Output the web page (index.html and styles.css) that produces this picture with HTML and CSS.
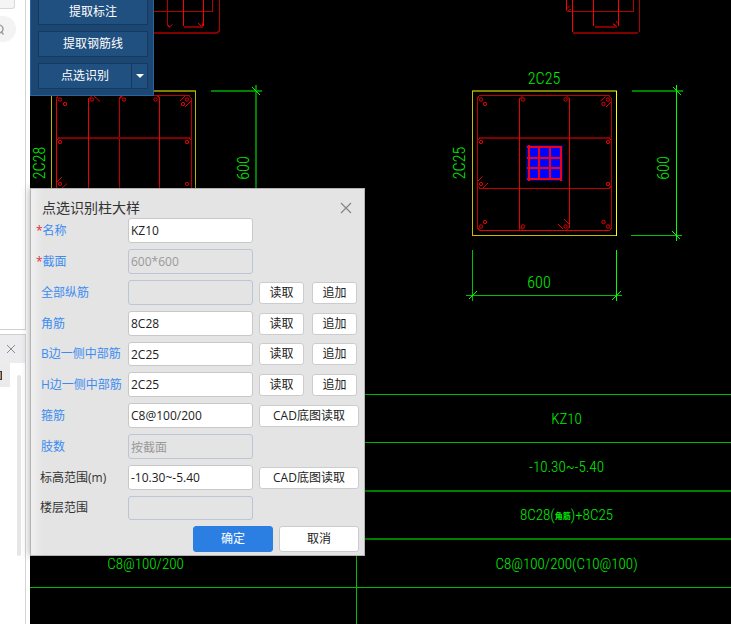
FILE: index.html
```html
<!DOCTYPE html>
<html lang="zh-CN">
<head>
<meta charset="utf-8">
<title>点选识别柱大样</title>
<link rel="stylesheet" href="styles.css">
</head>
<body>
<div class="app">
  <aside class="sidebar">
    <section class="pane pane-top">
      <div class="tab-stub"></div>
      <button class="search" aria-label="搜索"><svg width="16" height="26" viewBox="0 0 16 26"><circle cx="-1" cy="13" r="4" fill="none" stroke="#9a9a9a" stroke-width="1.4"/><path d="M1 15.500l2.500 3" stroke="#9a9a9a" stroke-width="1.4"/></svg></button>
    </section>
    <section class="pane pane-bottom">
      <header class="pane-head"><button class="pane-close" aria-label="关闭"><svg width="10" height="10" viewBox="0 0 10 10"><path d="M1 1l8 8M9 1l-8 8" stroke="#8c8c8c" fill="none"/></svg></button></header>
      <div class="pane-body">
        <div class="pane-item"><span class="item-mark"></span></div>
        <div class="scroll-thumb"></div>
      </div>
    </section>
  </aside>

  <main class="canvas">
    <svg class="drawing" viewBox="30 0 701 394" width="701" height="394" fill="none" shape-rendering="crispEdges">
      <g stroke="#b00000">
        <path d="M154 11.500H212.500V0M183.500 26V0M203.500 26V0M167.500 0v25l2 2M199 24l4 4M219.500 0V32"/>
        <path d="M154 33H217l2-2M184 27H203" stroke="#800000" stroke-width="2"/>
        <path d="M566.500 0V10l1 1.500H633.500V0M613 24l3 3M639.500 0V32"/>
        <path d="M573 33H638M595 27H617" stroke="#800000" stroke-width="2"/>
        <path d="M593.500 0V26M618.500 0V26M572.500 0V32M183.500 0V26M203.500 0V26M566.500 0V10" stroke="#ff0000"/>
      </g>
      <path d="M168 26l1.500 1 3-2.500M198 23l4 3.500 1-4M567 8.500l3-3M568 11l3-2M613 23.500l4 3M616 21l2 2.500" stroke="#e00000" shape-rendering="auto"/>

      <path d="M154 91H196" stroke="#808000" stroke-width="2"/>
      <path d="M51.500 92V200M195.500 91V200" stroke="#c0b400"/>
      <g stroke="#c00000">
        <path d="M56.500 200V98l2-2.500H189l2.500 3V200M119.500 200V98l2-2M159.500 98l-2-2"/>
        <path d="M58 138H190" stroke="#800000" stroke-width="2"/>
        <path d="M56.500 100V200M88.500 98V200M159.500 98V200" stroke="#f00000"/>
      </g>
      <g stroke="#e80000" shape-rendering="auto">
        <path d="M94 96l6 5.500M180 101l5-5M185 107l6-6M57 182l5-5M61 189l6-5.500M88.500 99l3-3M119.500 99l3-3M57 140l2-2M191 140l-2-2"/>
        <circle cx="60" cy="99.500" r="1.700"/><circle cx="65" cy="104" r="1.700"/><circle cx="92" cy="99.500" r="1.700"/><circle cx="124" cy="99.500" r="1.700"/><circle cx="155.500" cy="99.500" r="1.700"/><circle cx="187" cy="99.500" r="1.700"/><circle cx="183" cy="104" r="1.700"/><circle cx="60" cy="142" r="1.700"/><circle cx="187" cy="142" r="1.700"/><circle cx="60" cy="184" r="1.700"/><circle cx="187" cy="184" r="1.700"/>
      </g>

      <path d="M211 91H262M256 85V200" stroke="#008000" stroke-width="2"/>
      <path d="M252 87l8 8" stroke="#00ff00"/>

      <path d="M472 91H617" stroke="#808000" stroke-width="2"/>
      <path d="M472.500 91V235.500H616" stroke="#c8bc00"/>
      <path d="M616.500 91V236" stroke="#ffff00"/>
      <g stroke="#c00000">
        <path d="M477.500 98l2-2.500H609l2.500 3V228l-2 2.500H480l-2.500-2.500zM519.500 230V98M478 186l2 2.500H609l2-2"/>
        <path d="M479 138H610" stroke="#800000" stroke-width="2"/>
        <path d="M519.500 98V228M480 230.500H609M569.500 98V228" stroke="#e80000"/>
      </g>
      <g stroke="#e80000" shape-rendering="auto">
        <path d="M600.500 101l5-4.500M606 107l5-5M478 181l4.500-4.500M483 188l5-5M558 224l5 5M564 219l5 5M519.500 99l3-3M569.500 99l-3-3M478 140l2-2M611 140l-2-2M519.500 227l3 3M569.500 227l-3 3"/>
        <circle cx="481" cy="99.500" r="1.700"/><circle cx="485" cy="104" r="1.700"/><circle cx="523" cy="99.500" r="1.700"/><circle cx="565.500" cy="99.500" r="1.700"/><circle cx="608" cy="99.500" r="1.700"/><circle cx="603.500" cy="104" r="1.700"/><circle cx="481" cy="142" r="1.700"/><circle cx="608" cy="142" r="1.700"/><circle cx="481" cy="184" r="1.700"/><circle cx="608" cy="184" r="1.700"/><circle cx="485" cy="222" r="1.700"/><circle cx="481" cy="226.500" r="1.700"/><circle cx="523" cy="226.500" r="1.700"/><circle cx="565.500" cy="226.500" r="1.700"/><circle cx="608" cy="226.500" r="1.700"/><circle cx="603.500" cy="222" r="1.700"/>
      </g>
      <rect x="526" y="145" width="37" height="36" fill="#000090"/>
      <rect x="528" y="146" width="33" height="34" fill="#0000ff"/>
      <path d="M528.500 145V181M527 147H562M561 146V181M527 179H562M539 147V179M550 147V179M527 158H562M527 168H562" stroke="#f00010" stroke-width="2"/>

      <g stroke="#00c000">
        <path d="M631 235.500H682M472.500 250V301M466 295.500H622"/>
        <path d="M632 91H683" stroke="#008000" stroke-width="2"/>
        <path d="M676.500 85V241M616.500 250V301M673 87l8 8M672 231l8 8M469 299l8-8M612 300l9-9" stroke="#00ff00"/>
      </g>
      <g class="dims" shape-rendering="auto">
        <text x="544" y="84">2C25</text>
        <text x="539" y="288">600</text>
        <text transform="translate(465 163) rotate(-90)">2C25</text>
        <text transform="translate(669 168) rotate(-90)">600</text>
        <text transform="translate(45 163) rotate(-90)">2C28</text>
        <text transform="translate(249 168) rotate(-90)">600</text>
      </g>
    </svg>
    <table class="schedule">
      <tbody>
        <tr><td></td><td>KZ10</td></tr>
        <tr><td></td><td>-10.30~-5.40</td></tr>
        <tr class="heavy"><td></td><td>8C28(<span class="cjk">角筋</span>)+8C25</td></tr>
        <tr class="heavy last"><td>C8@100/200</td><td>C8@100/200(C10@100)</td></tr>
        <tr class="rest"><td></td><td></td></tr>
      </tbody>
    </table>
  </main>

  <nav class="tools">
    <button class="tool">提取标注</button>
    <button class="tool">提取钢筋线</button>
    <div class="split">
      <button class="tool">点选识别</button>
      <button class="tool tool-arrow" aria-label="更多"><svg width="8" height="4" viewBox="0 0 8 4"><path d="M0 0h8L4 4z" fill="#fff"/></svg></button>
    </div>
  </nav>

  <form class="dialog" role="dialog" aria-labelledby="dlg-title">
    <header class="dialog-head">
      <h1 id="dlg-title">点选识别柱大样</h1>
      <button type="button" class="dialog-close" aria-label="关闭"><svg width="12" height="12" viewBox="0 0 12 12"><path d="M1 1l10 10M11 1L1 11" stroke="#858585" fill="none" stroke-width="1.200"/></svg></button>
    </header>
    <div class="fields">
      <div class="field"><label class="required" for="f1">名称</label><input id="f1" value="KZ10"></div>
      <div class="field"><label class="required" for="f2">截面</label><input id="f2" value="600*600" disabled></div>
      <div class="field"><label for="f3">全部纵筋</label><input id="f3" disabled><div class="acts"><button type="button" class="btn">读取</button><button type="button" class="btn">追加</button></div></div>
      <div class="field"><label for="f4">角筋</label><input id="f4" value="8C28"><div class="acts"><button type="button" class="btn">读取</button><button type="button" class="btn">追加</button></div></div>
      <div class="field compact"><label for="f5">B边一侧中部筋</label><input id="f5" value="2C25"><div class="acts"><button type="button" class="btn">读取</button><button type="button" class="btn">追加</button></div></div>
      <div class="field"><label for="f6">H边一侧中部筋</label><input id="f6" value="2C25"><div class="acts"><button type="button" class="btn">读取</button><button type="button" class="btn">追加</button></div></div>
      <div class="field"><label for="f7">箍筋</label><input id="f7" value="C8@100/200"><div class="acts"><button type="button" class="btn wide">CAD底图读取</button></div></div>
      <div class="field"><label for="f8">肢数</label><input id="f8" value="按截面" disabled></div>
      <div class="field"><label class="plain" for="f9">标高范围(m)</label><input id="f9" value="-10.30~-5.40"><div class="acts"><button type="button" class="btn wide">CAD底图读取</button></div></div>
      <div class="field compact"><label class="plain" for="f10">楼层范围</label><input id="f10" disabled></div>
    </div>
    <footer class="dialog-foot">
      <button type="button" class="btn large primary">确定</button>
      <button type="button" class="btn large">取消</button>
    </footer>
  </form>
</div>
</body>
</html>
```
FILE: styles.css
```css
* { box-sizing: border-box; }

body {
  margin: 0;
  background: #fff;
  font: 12px/16px "Open Sans", "Noto Sans CJK SC", sans-serif;
  color: #333;
}

button, input { font: inherit; }
button { padding: 0; border: 0; background: none; }

.app {
  position: relative;
  display: flex;
  height: 100vh;
  overflow: hidden;
}

/* side panes */
.sidebar {
  flex: 0 0 30px;
  display: flex;
  flex-direction: column;
  gap: 4px;
  padding-right: 4px;
}
.pane { border-right: 1px solid #d4d4d4; }
.pane-top { height: 330px; border-bottom: 1px solid #d0d0d0; }
.tab-stub {
  width: 15px;
  height: 9px;
  margin-bottom: 7px;
  background: #f5f5f5;
  border: solid #d8d8d8;
  border-width: 0 1px 1px 0;
  border-radius: 0 0 3px 0;
}
.search {
  display: block;
  width: 16px;
  height: 26px;
  background: #f3f3f3;
  border-radius: 0 13px 13px 0;
}
.search svg { display: block; }
.pane-bottom { flex: 1; border-top: 1px solid #d0d0d0; }
.pane-head {
  display: flex;
  justify-content: center;
  align-items: center;
  height: 28px;
  padding-right: 3px;
  background: #ececee;
}
.pane-close { height: 10px; line-height: 0; }
.pane-body { display: flex; gap: 7px; }
.pane-item { width: 10px; height: 24px; padding-top: 8px; background: #ebebeb; }
.item-mark {
  display: block;
  width: 2px;
  height: 9px;
  background: #d98a3c;
  border: solid #2a3a5a;
  border-width: 1px 1px 1px 0;
}
.scroll-thumb {
  width: 4px;
  height: 181px;
  margin-top: 12px;
  background: #e6e6e6;
  border-radius: 2px;
}

/* drawing area */
.canvas {
  flex: 1;
  display: flex;
  flex-direction: column;
  min-width: 0;
  background: #000;
  overflow: hidden;
}
.drawing { display: block; flex: none; }
.dims text {
  fill: #00f000;
  font: 300 16px "Roboto Condensed", "Liberation Sans Narrow", sans-serif;
  text-anchor: middle;
}
.schedule {
  flex: 1;
  width: 100%;
  table-layout: fixed;
  border-collapse: separate;
  border-spacing: 0;
  color: #00f000;
  font: 300 15px/20px "Roboto Condensed", "Liberation Sans Narrow", sans-serif;
  text-align: center;
}
.schedule tr { height: 48px; }
.schedule .last { height: 49px; }
.schedule td { padding: 0; border-top: 1px solid #00b800; }
.schedule td:first-child { width: 326px; padding-right: 95px; }
.schedule td:last-child { padding-left: 45px; border-left: 1px solid #00c000; }
.schedule .heavy td { border-top: 2px solid #008000; }
.schedule .rest { height: auto; }
.cjk {
  font-family: "Noto Sans CJK SC", sans-serif;
  font-size: 8px;
  font-weight: 700;
  line-height: 10px;
  vertical-align: middle;
}

/* tool strip */
.tools {
  position: absolute;
  left: 30px;
  top: -10px;
  display: flex;
  flex-direction: column;
  gap: 6px;
  width: 124px;
  padding: 8px 5px 6px 7px;
  background: #1c4773;
  border: 1px solid #2a64a0;
}
.tool {
  width: 110px;
  height: 26px;
  background: #20507f;
  border: 1px solid #163a5f;
  color: #fff;
}
.split { display: flex; }
.split .tool { flex: 1; border-right-width: 0; }
.split .tool-arrow { flex: 0 0 17px; border-right-width: 1px; line-height: 0; }

/* dialog */
.dialog {
  position: absolute;
  left: 30px;
  top: 188px;
  width: 335px;
  padding: 9px 5px 3px;
  background: linear-gradient(90deg, #f0f0f0, #e4e4e4 12px);
  border: 1px solid #b4b4b4;
  box-shadow: 0 0 8px rgba(0, 0, 0, .35);
}
.dialog-head {
  display: flex;
  justify-content: space-between;
  align-items: center;
  height: 20px;
  padding: 0 7px 0 6px;
}
.dialog-head h1 { margin: 0; font-size: 14px; font-weight: 400; line-height: 20px; }
.dialog-close { height: 12px; line-height: 0; }
.fields { display: grid; gap: 6px; }
.field {
  display: grid;
  grid-template-columns: 92px 125px 1fr;
  align-items: center;
}
.field label { padding-left: 5px; color: #3c8cf0; white-space: nowrap; }
.field .required { padding-left: 0; }
.required::before { content: "*"; color: #e03030; }
.field .plain { padding-left: 4px; color: #333; }
.field input {
  width: 100%;
  height: 25px;
  padding: 0 2px;
  background: #fff;
  border: 1px solid #c8c8c8;
  border-radius: 3px;
  color: #222;
}
.compact input { height: 24px; }
.field input:disabled {
  background: transparent;
  border-color: #bcc5d6;
  color: #999;
}
.acts { display: flex; gap: 8px; padding-left: 6px; }
.btn {
  width: 45px;
  height: 22px;
  background: #fff;
  border: 1px solid #ccc;
  border-radius: 3px;
  color: #222;
}
.wide { width: 100px; }
.large { width: 80px; height: 26px; }
.primary { background: #2b7fe3; border-color: #2b7fe3; color: #fff; }
.dialog-foot { display: flex; justify-content: flex-end; gap: 6px; padding-top: 6px; }
```
